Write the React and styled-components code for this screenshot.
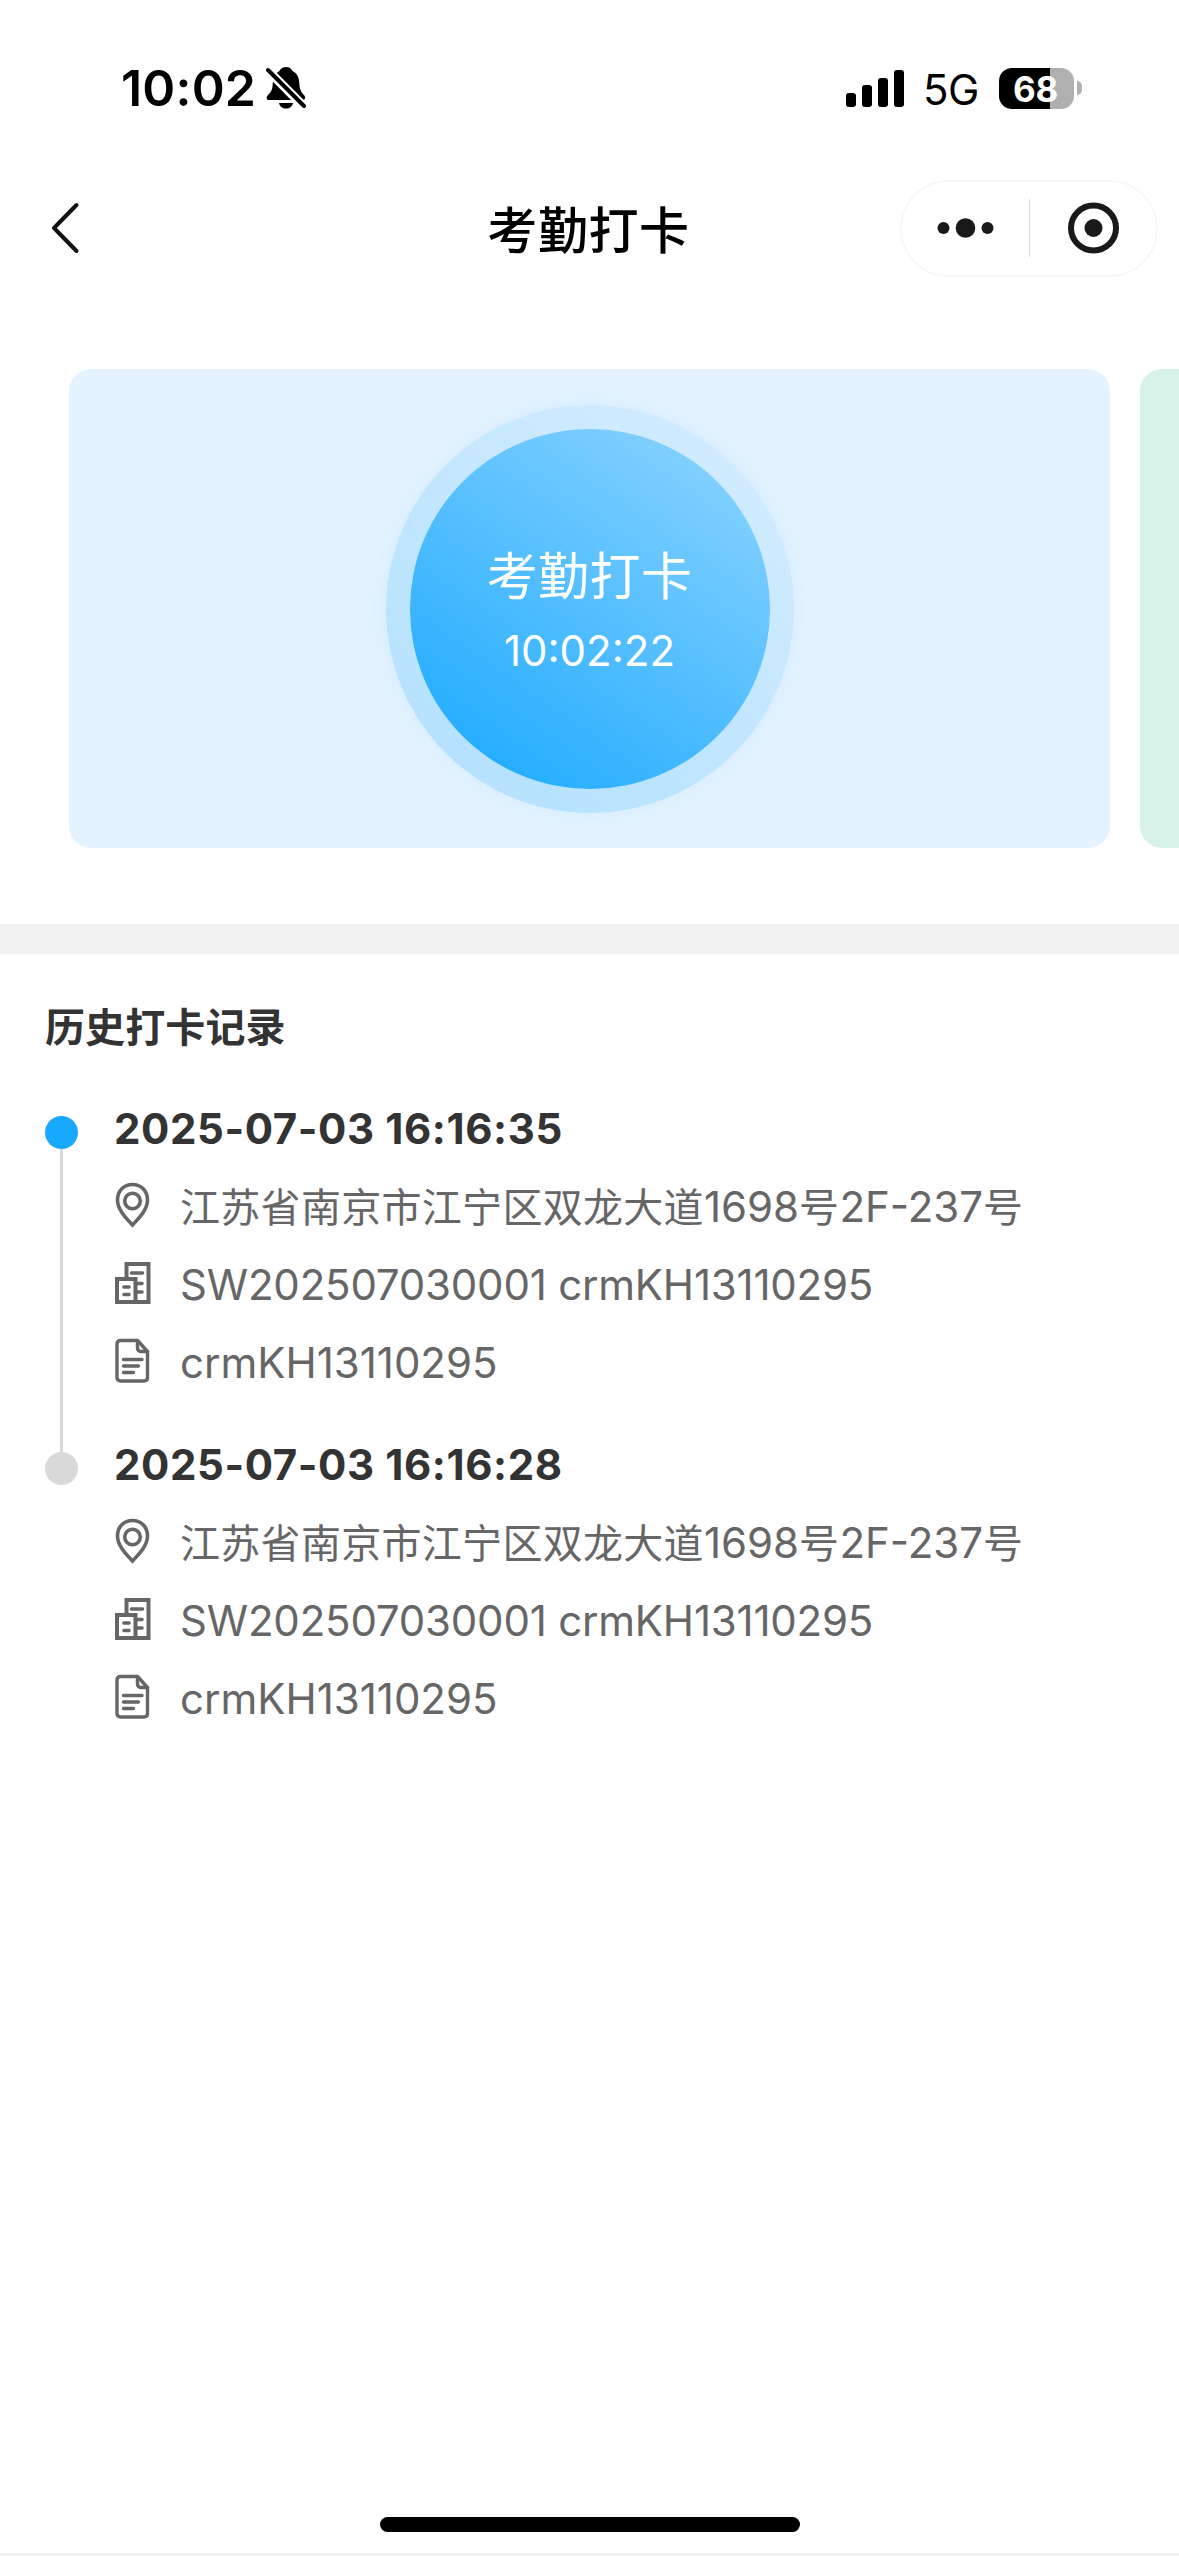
//Attendance screen: status bar, navigation, punch card carousel and timeline with punch history

import styled, { createGlobalStyle } from 'styled-components';

const GlobalStyle = createGlobalStyle`
    * {
        box-sizing: border-box;
    }

    body {
        margin: 0;
        background: #fff;
        font-family: Inter, "Noto Sans CJK SC", sans-serif;
    }
`;

const Screen = styled.div`
    display: flex;
    flex-direction: column;
    width: 1179px;
    height: 2556px;
    overflow: hidden;
    background: #fff;
    border-bottom: 3px solid #f1f1f1;
`;

const StatusBar = styled.div`
    display: flex;
    justify-content: space-between;
    align-items: center;
    flex: none;
    height: 176px;
    padding: 0 97px 0 121px;
`;

const StatusGroup = styled.div`
    display: flex;
    align-items: center;
`;

const Clock = styled.span`
    width: 145px;
    font-size: 50px;
    font-weight: 600;
    line-height: 60px;
    letter-spacing: 0.2px;
`;

const Signal = styled.div`
    display: flex;
    align-items: flex-end;
    gap: 6px;
    height: 38px;
    margin-right: 19px;
`;

const SignalBar = styled.span`
    width: 10px;
    height: ${props => props.$height}px;
    border-radius: 3px;
    background: #000;
`;

const Network = styled.span`
    width: 76px;
    font-size: 42px;
    line-height: 50px;
    padding-top: 3px;
    letter-spacing: -0.6px;
`;

const Battery = styled.div`
    width: 75px;
    height: 41px;
    border-radius: 13px;
    background: linear-gradient(90deg, #000 68%, #b0b0b0 68%);
    color: #fff;
    font-size: 35px;
    font-weight: 700;
    line-height: 42px;
    text-align: center;
    letter-spacing: -0.2px;
    padding-right: 2px;
`;

const BatteryCap = styled.span`
    width: 5px;
    height: 14px;
    margin-left: 3px;
    border-radius: 0 5px 5px 0;
    background: #b0b0b0;
`;

const NavBar = styled.header`
    display: grid;
    grid-template-columns: 1fr auto 1fr;
    align-items: center;
    flex: none;
    height: 104px;
    padding: 0 21px;
`;

const Title = styled.h1`
    margin: 0;
    padding: 5px 2px 0 0;
    font-size: 50px;
    font-weight: 500;
    line-height: 60px;
    letter-spacing: 0.6px;
`;

const Capsule = styled.div`
    display: flex;
    align-items: center;
    justify-self: end;
    width: 258px;
    height: 97px;
    border: 2px solid #f7f7f7;
    border-radius: 49px;
`;

const CapsuleButton = styled.div`
    display: flex;
    justify-content: center;
    flex: 1;
`;

const CapsuleDivider = styled.span`
    width: 1px;
    height: 58px;
    background: #dcdcdc;
`;

const Carousel = styled.section`
    display: flex;
    flex: none;
    gap: 30px;
    padding: 89px 0 76px 69px;
    overflow: hidden;
`;

const Slide = styled.div`
    display: flex;
    justify-content: center;
    align-items: center;
    flex: none;
    width: 1041px;
    height: 479px;
    border-radius: 22px;
    background: ${props => props.$color};
`;

const PunchRing = styled.div`
    padding: 24px;
    border-radius: 50%;
    background: linear-gradient(38deg, #b0e0ff, #d6edff);
    box-shadow: 0 0 24px rgba(120, 195, 255, 0.14);
`;

const PunchButton = styled.div`
    display: flex;
    flex-direction: column;
    align-items: center;
    width: 360px;
    height: 360px;
    padding-top: 118px;
    border-radius: 50%;
    background: linear-gradient(35deg, #25adff 12%, #82d0ff 88%);
    color: #fff;
`;

const PunchLabel = styled.span`
    font-size: 51px;
    line-height: 60px;
    letter-spacing: 0.4px;
`;

const PunchTime = styled.span`
    margin-top: 19px;
    font-size: 42px;
    line-height: 50px;
`;

const Band = styled.div`
    flex: none;
    height: 30px;
    background: #f1f1f1;
`;

const History = styled.section`
    flex: 1;
    padding: 44px 45px 0;
`;

const HistoryTitle = styled.h2`
    margin: 0 0 32px;
    font-size: 40px;
    font-weight: 700;
    line-height: 60px;
    letter-spacing: 0.1px;
    color: #333;
`;

const Item = styled.div`
    display: grid;
    grid-template-columns: 33px 1fr;
    column-gap: 36px;
    height: 336px;
`;

const Track = styled.div`
    display: flex;
    flex-direction: column;
    align-items: center;
    padding-top: 26px;
`;

const Dot = styled.span`
    flex: none;
    width: 33px;
    height: 33px;
    border-radius: 50%;
    background: ${props => props.$active ? '#18a9ff' : '#d9d9d9'};
`;

const Line = styled.span`
    width: 3px;
    height: 303px;
    background: #d9d9d9;
`;

const Time = styled.div`
    font-size: 42px;
    font-weight: 650;
    line-height: 78px;
    letter-spacing: 0.6px;
    color: #333;
`;

const Row = styled.div`
    display: grid;
    grid-template-columns: 66px 1fr;
    align-items: center;
    height: 78px;

    svg {
        margin: 0 0 5px 1px;
    }
`;

const RowText = styled.span`
    font-size: 42px;
    line-height: 78px;
    white-space: nowrap;
    letter-spacing: ${props => props.$tight ? '-0.2px' : '0'};
    color: #666;
`;

const Cjk = styled.span`
    font-size: 40px;
    letter-spacing: 0.3px;
`;

const HomeIndicator = styled.div`
    flex: none;
    align-self: center;
    width: 420px;
    height: 15px;
    margin-bottom: 21px;
    border-radius: 8px;
    background: #000;
`;

const BellOff = () => (
    <svg width="40" height="44" viewBox="0 0 40 44">
        <path d="M20 1C15.500 1 14 4 13.500 5C9 7.500 7 11 6.800 17C6.500 24 5 26 2.500 28.500C-0.500 31.500 0.500 34 3 34H37C39.500 34 40 31 37.500 28.500C35 26 33.500 23 33.300 17C33.100 11 31 7.500 26.500 5C26 4 24.500 1 20 1Z" />
        <path d="M13 37H27C26.500 40.500 23.500 42.500 20 42.500C16.500 42.500 13.500 40.500 13 37Z" />
        <path d="M2 4.500L38 40.500" stroke="#fff" strokeWidth="9" />
        <path d="M2 4L38 40" stroke="#000" strokeWidth="4" strokeLinecap="round" />
    </svg>
);

const BackIcon = styled.svg`
    margin-left: 29px;
`;

const Back = () => (
    <BackIcon width="30" height="52" viewBox="0 0 30 52" fill="none" stroke="#111" strokeWidth="4" strokeLinecap="round" strokeLinejoin="round">
        <path d="M26.500 3L4 26L26.500 49" />
    </BackIcon>
);

const More = () => (
    <svg width="58" height="22" viewBox="0 0 58 22" fill="#191919">
        <circle cx="7.500" cy="11" r="6" />
        <circle cx="29.500" cy="11" r="9.800" />
        <circle cx="51.500" cy="11" r="6" />
    </svg>
);

const Target = () => (
    <svg width="52" height="52" viewBox="0 0 52 52">
        <circle cx="26.500" cy="26" r="22.500" fill="none" stroke="#191919" strokeWidth="6" />
        <circle cx="26.500" cy="26" r="9" fill="#191919" />
    </svg>
);

const Pin = () => (
    <svg width="36" height="46" viewBox="0 0 36 46" fill="none" stroke="#666" strokeWidth="3.600">
        <path d="M17.500 43C12 37 2.500 28 2.500 18C2.500 8.500 9 2.500 17.500 2.500S32.500 8.500 32.500 18C32.500 28 23 37 17.500 43Z" />
        <circle cx="17.500" cy="19" r="7.800" />
    </svg>
);

const Building = () => (
    <svg width="36" height="46" viewBox="0 0 36 46" fill="none" stroke="#666" strokeWidth="4">
        <path d="M11.500 18V4H33.500V42H2V19H20.500V42" />
        <path d="M16.500 13H27.500M22.500 23.500H27M22.500 32H27M9 27H14M9 34.500H14" strokeWidth="3.600" strokeLinecap="round" />
    </svg>
);

const Doc = () => (
    <svg width="36" height="46" viewBox="0 0 36 46" fill="none" stroke="#666" strokeWidth="3.400" strokeLinejoin="round">
        <path d="M5.500 2.500H22.500L32.500 13.500V39.500Q32.500 43 29 43H5.500Q2 43 2 39.500V6Q2 2.500 5.500 2.500Z" />
        <path d="M22.500 3V10Q22.500 13.500 26 13.500H32.500M8.500 21.500H27M8.500 28H23.500M8.500 34.500H18.500" strokeLinecap="round" />
    </svg>
);

const records = [
    {id: 1, time: '2025-07-03 16:16:35', code: 'SW202507030001 crmKH13110295', note: 'crmKH13110295'},
    {id: 2, time: '2025-07-03 16:16:28', code: 'SW202507030001 crmKH13110295', note: 'crmKH13110295'}
];

const Record = ({record, active, last}) => {
    return (
        <Item>
            <Track>
                <Dot $active={active} />
                {last ? null : <Line />}
            </Track>
            <div>
                <Time>{record.time}</Time>
                <Row>
                    <Pin />
                    <RowText><Cjk>江苏省南京市江宁区双龙大道</Cjk>1698<Cjk>号</Cjk>2F-237<Cjk>号</Cjk></RowText>
                </Row>
                <Row>
                    <Building />
                    <RowText $tight>{record.code}</RowText>
                </Row>
                <Row>
                    <Doc />
                    <RowText>{record.note}</RowText>
                </Row>
            </div>
        </Item>
    );
}

const App = () => {
    return (
        <>
            <GlobalStyle />
            <Screen>
                <StatusBar>
                    <StatusGroup>
                        <Clock>10:02</Clock>
                        <BellOff />
                    </StatusGroup>
                    <StatusGroup>
                        <Signal>
                            {[14, 22, 29, 37].map(height => <SignalBar key={height} $height={height} />)}
                        </Signal>
                        <Network>5G</Network>
                        <Battery>68</Battery>
                        <BatteryCap />
                    </StatusGroup>
                </StatusBar>
                <NavBar>
                    <Back />
                    <Title>考勤打卡</Title>
                    <Capsule>
                        <CapsuleButton><More /></CapsuleButton>
                        <CapsuleDivider />
                        <CapsuleButton><Target /></CapsuleButton>
                    </Capsule>
                </NavBar>
                <Carousel>
                    <Slide $color="#e4f3ff">
                        <PunchRing>
                            <PunchButton>
                                <PunchLabel>考勤打卡</PunchLabel>
                                <PunchTime>10:02:22</PunchTime>
                            </PunchButton>
                        </PunchRing>
                    </Slide>
                    <Slide $color="#d7f2e8" />
                </Carousel>
                <Band />
                <History>
                    <HistoryTitle>历史打卡记录</HistoryTitle>
                    {records.map((record, i) => (
                        <Record key={record.id} record={record} active={i === 0} last={i === records.length - 1} />
                    ))}
                </History>
                <HomeIndicator />
            </Screen>
        </>
    );
}

export default App;
